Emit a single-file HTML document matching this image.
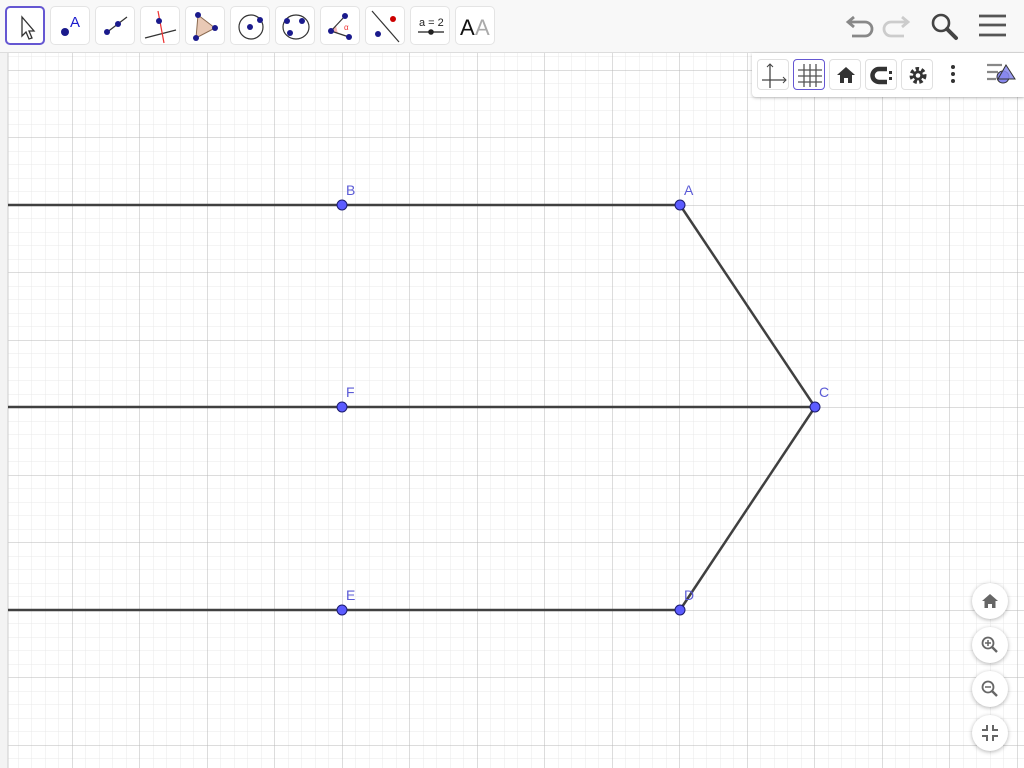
<!DOCTYPE html>
<html><head><meta charset="utf-8"><style>
*{margin:0;padding:0;box-sizing:border-box}
body{width:1024px;height:768px;overflow:hidden;background:#fff;font-family:"Liberation Sans",sans-serif;position:relative}
#tb{position:absolute;left:0;top:0;width:1024px;height:53px;background:#f8f8f8;border-bottom:1px solid #ddd}
.b{position:absolute;top:6px;width:40px;height:39px;border:1px solid #e4e4e4;border-radius:5px;background:#fff}
.b svg{position:absolute;left:0;top:0}
.sel{border:2px solid #6557d2}
#sb{position:absolute;left:752px;top:53px;width:272px;height:44px;background:#fff;border-radius:0 0 0 4px;box-shadow:0 1px 3px rgba(0,0,0,.25)}
.s{position:absolute;top:6px;width:32px;height:31px;border:1px solid #e0e0e0;border-radius:4px;background:#fff}
.z{position:absolute;left:972px;width:36px;height:36px;border-radius:50%;background:#fff;box-shadow:0 1px 4px rgba(0,0,0,.3)}
.z svg{position:absolute;left:0;top:0}
</style></head><body>
<svg style="position:absolute;left:0;top:0" width="1024" height="768">
<defs>
<pattern id="mi" patternUnits="userSpaceOnUse" x="4.5" y="2.5" width="13.5" height="13.5"><path d="M0 0H13.5M0 0V13.5" stroke="#e8e8e8" stroke-width="1" fill="none"/></pattern>
<pattern id="ma" patternUnits="userSpaceOnUse" x="4.5" y="2.5" width="67.5" height="67.5"><path d="M0 0H67.5M0 0V67.5" stroke="#b8b8b8" stroke-width="1" fill="none"/></pattern>
</defs>
<rect x="0" y="53" width="1024" height="715" fill="url(#mi)"/>
<rect x="0" y="53" width="1024" height="715" fill="url(#ma)"/>
<rect x="0" y="53" width="8" height="715" fill="#f3f3f3"/>
<line x1="8" y1="53" x2="8" y2="768" stroke="#ccc"/>
<g stroke="#404040" stroke-width="2.5" fill="none">
<line x1="8" y1="205" x2="680" y2="205"/>
<line x1="8" y1="407" x2="815" y2="407"/>
<line x1="8" y1="610" x2="680" y2="610"/>
<line x1="680" y1="205" x2="815" y2="407"/>
<line x1="815" y1="407" x2="680" y2="610"/>
</g>
<g fill="#5c5cff" stroke="#1a1a6e" stroke-width="1">
<circle cx="342" cy="205" r="5"/><circle cx="680" cy="205" r="5"/><circle cx="342" cy="407" r="5"/><circle cx="815" cy="407" r="5"/><circle cx="342" cy="610" r="5"/><circle cx="680" cy="610" r="5"/>
</g>
<g fill="#5b5bd6" font-family="Liberation Sans" font-size="14">
<text x="346" y="195">B</text><text x="684" y="195">A</text><text x="346" y="397">F</text><text x="819" y="397">C</text><text x="346" y="600">E</text><text x="684" y="600">D</text>
</g>
</svg>
<div id="tb">
<div class="b sel" style="left:5px"><svg width="40" height="39"><path d="M15 9 L15 28 L19 24 L22 31 L25 30 L22 23 L27 23 Z" fill="#fff" stroke="#333" stroke-width="1.3"/></svg></div>
<div class="b" style="left:50px"><svg width="40" height="39"><circle cx="14" cy="25" r="4" fill="#1a1a8c"/><text x="19" y="20" font-size="15" fill="#1a1acc" font-family="Liberation Sans">A</text></svg></div>
<div class="b" style="left:95px"><svg width="40" height="39"><line x1="10" y1="26" x2="31" y2="10" stroke="#333" stroke-width="1.2"/><circle cx="11" cy="25" r="3" fill="#1a1a8c"/><circle cx="22" cy="17" r="3" fill="#1a1a8c"/></svg></div>
<div class="b" style="left:140px"><svg width="40" height="39"><line x1="4" y1="31" x2="35" y2="23" stroke="#333" stroke-width="1.2"/><line x1="17" y1="4" x2="23" y2="36" stroke="#e33" stroke-width="1.2"/><circle cx="18" cy="14" r="3" fill="#1a1a8c"/></svg></div>
<div class="b" style="left:185px"><svg width="40" height="39"><path d="M12 8 L29 21 L10 31 Z" fill="#e9c9b5" stroke="#8a6a50"/><circle cx="12" cy="8" r="3" fill="#1a1a8c"/><circle cx="29" cy="21" r="3" fill="#1a1a8c"/><circle cx="10" cy="31" r="3" fill="#1a1a8c"/></svg></div>
<div class="b" style="left:230px"><svg width="40" height="39"><circle cx="20" cy="20" r="12" fill="none" stroke="#333" stroke-width="1.2"/><circle cx="19" cy="20" r="3" fill="#1a1a8c"/><circle cx="29" cy="13" r="3" fill="#1a1a8c"/></svg></div>
<div class="b" style="left:275px"><svg width="40" height="39"><ellipse cx="20" cy="20" rx="13" ry="12" fill="none" stroke="#333" stroke-width="1.2"/><circle cx="11" cy="14" r="3" fill="#1a1a8c"/><circle cx="26" cy="14" r="3" fill="#1a1a8c"/><circle cx="14" cy="26" r="3" fill="#1a1a8c"/></svg></div>
<div class="b" style="left:320px"><svg width="40" height="39"><path d="M10 24 L17 27 L15 19 Z" fill="#f4b5b5"/><line x1="10" y1="24" x2="24" y2="9" stroke="#333" stroke-width="1.2"/><line x1="10" y1="24" x2="28" y2="30" stroke="#333" stroke-width="1.2"/><circle cx="10" cy="24" r="3" fill="#1a1a8c"/><circle cx="24" cy="9" r="3" fill="#1a1a8c"/><circle cx="28" cy="30" r="3" fill="#1a1a8c"/><text x="23" y="23" font-size="8" fill="#e33">α</text></svg></div>
<div class="b" style="left:365px"><svg width="40" height="39"><line x1="6" y1="4" x2="33" y2="35" stroke="#333" stroke-width="1.2"/><circle cx="27" cy="12" r="3" fill="#c00"/><circle cx="12" cy="27" r="3" fill="#1a1a8c"/></svg></div>
<div class="b" style="left:410px"><svg width="40" height="39"><text x="8" y="19" font-size="11" fill="#222" font-family="Liberation Sans">a = 2</text><line x1="7" y1="25" x2="33" y2="25" stroke="#444" stroke-width="1.6"/><circle cx="20" cy="25" r="2.8" fill="#222"/></svg></div>
<div class="b" style="left:455px"><svg width="40" height="39"><text x="4" y="28" font-size="22" fill="#111" font-family="Liberation Sans">A</text><text x="19" y="28" font-size="22" fill="#aaa" font-family="Liberation Sans">A</text></svg></div>
<svg style="position:absolute;left:840px;top:10px" width="180" height="34">
<path d="M14 7 L8 12 L14 17 M8 12 H25 A6 6 0 0 1 25 26 H12" fill="none" stroke="#888" stroke-width="2.8"/>
<path d="M62 7 L68 12 L62 17 M68 12 H51 A6 6 0 0 0 51 26 H64" fill="none" stroke="#ccc" stroke-width="2.8"/>
<circle cx="101" cy="13" r="8" fill="none" stroke="#444" stroke-width="2.6"/><line x1="107" y1="19" x2="116" y2="28" stroke="#444" stroke-width="4" stroke-linecap="round"/>
<path d="M139 6H166M139 15H166M139 25H166" stroke="#555" stroke-width="2.8"/>
</svg>
</div>
<div id="sb">
<div class="s" style="left:5px"><svg width="32" height="31"><path d="M4 20H28M12 4V28" stroke="#444" stroke-width="1.3" fill="none"/><path d="M25 17L28 20L25 23M9 7L12 4L15 7" fill="none" stroke="#444"/></svg></div>
<div class="s" style="left:41px;border-color:#6557d2"><svg width="32" height="31"><path d="M10 4V27M16 4V27M22 4V27M4 10H28M4 16H28M4 22H28" stroke="#555" stroke-width="1.3"/></svg></div>
<div class="s" style="left:77px"><svg width="32" height="31"><path d="M16 7L7 15H10V23H14V18H18V23H22V15H25Z" fill="#333"/></svg></div>
<div class="s" style="left:113px"><svg width="32" height="31"><path d="M21 9H13A6 6 0 0 0 13 22H21" fill="none" stroke="#333" stroke-width="4.5"/><rect x="23" y="11" width="3" height="3" fill="#333"/><rect x="23" y="17" width="3" height="3" fill="#333"/></svg></div>
<div class="s" style="left:149px"><svg width="32" height="31"><circle cx="16" cy="15.5" r="6" fill="none" stroke="#333" stroke-width="5" stroke-dasharray="3 2.2"/><circle cx="16" cy="15.5" r="5" fill="#333"/><circle cx="16" cy="15.5" r="2.3" fill="#fff"/></svg></div>
<svg style="position:absolute;left:196px;top:10px" width="10" height="24"><circle cx="5" cy="4" r="2" fill="#333"/><circle cx="5" cy="11" r="2" fill="#333"/><circle cx="5" cy="18" r="2" fill="#333"/></svg>
<svg style="position:absolute;left:232px;top:8px" width="40" height="28"><path d="M3 4H18M3 11H14M3 18H12" stroke="#888" stroke-width="2.2"/><circle cx="19" cy="16" r="6" fill="#8888ee" stroke="#333"/><path d="M22 4L31 18H14Z" fill="#8888ee" stroke="#333" fill-opacity=".85"/></svg>
</div>
<div class="z" style="top:583px"><svg width="36" height="36"><path d="M18 11L10 18H12.5V25H16V21H20V25H23.5V18H26Z" fill="#666"/></svg></div>
<div class="z" style="top:627px"><svg width="36" height="36"><circle cx="16" cy="16" r="5.5" fill="none" stroke="#666" stroke-width="1.8"/><path d="M13 16H19M16 13V19" stroke="#666" stroke-width="1.5"/><line x1="20" y1="20" x2="25" y2="25" stroke="#666" stroke-width="2.4"/></svg></div>
<div class="z" style="top:671px"><svg width="36" height="36"><circle cx="16" cy="16" r="5.5" fill="none" stroke="#666" stroke-width="1.8"/><path d="M13 16H19" stroke="#666" stroke-width="1.5"/><line x1="20" y1="20" x2="25" y2="25" stroke="#666" stroke-width="2.4"/></svg></div>
<div class="z" style="top:715px"><svg width="36" height="36"><path d="M15 10V15H10M21 10V15H26M15 26V21H10M21 26V21H26" fill="none" stroke="#666" stroke-width="2"/></svg></div>
</body></html>
